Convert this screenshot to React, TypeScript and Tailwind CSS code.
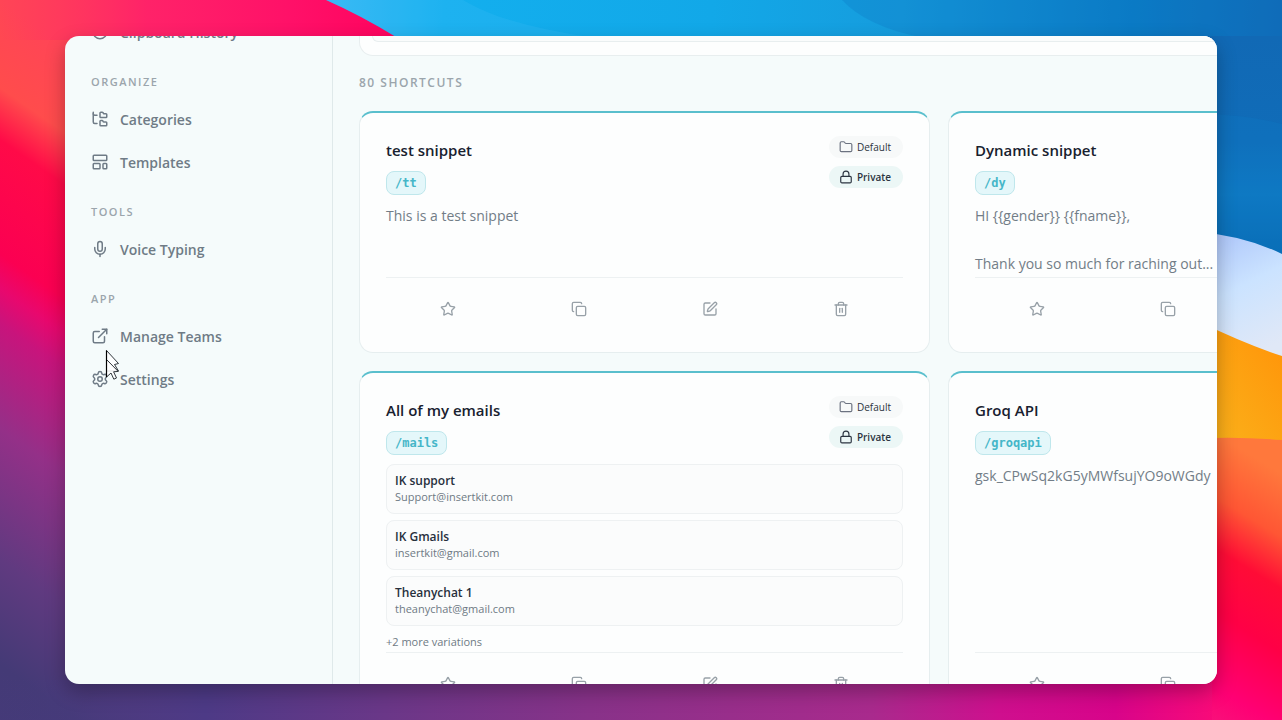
import type { ReactNode } from "react";
import {
  Copy,
  ExternalLink,
  Folder,
  FolderTree,
  History,
  LayoutTemplate,
  Lock,
  Mic,
  Settings,
  SquarePen,
  Star,
  Trash2,
} from "lucide-react";

type Variation = { name: string; value: string };
type Snippet = { title: string; shortcut: string; body?: string; variations?: Variation[]; more?: string };

const snippets: Snippet[] = [
  { title: "test snippet", shortcut: "/tt", body: "This is a test snippet" },
  { title: "Dynamic snippet", shortcut: "/dy", body: "HI {{gender}} {{fname}},\n\nThank you so much for raching out..." },
  {
    title: "All of my emails",
    shortcut: "/mails",
    variations: [
      { name: "IK support", value: "Support@insertkit.com" },
      { name: "IK Gmails", value: "insertkit@gmail.com" },
      { name: "Theanychat 1", value: "theanychat@gmail.com" },
    ],
    more: "+2 more variations",
  },
  { title: "Groq API", shortcut: "/groqapi", body: "gsk_CPwSq2kG5yMWfsujYO9oWGdy" },
];

function Wallpaper() {
  return (
    <svg
      className="absolute inset-0 size-full"
      viewBox="0 0 1282 720"
      preserveAspectRatio="none"
      aria-hidden="true"
    >
      <defs>
        <linearGradient id="dusk" gradientUnits="userSpaceOnUse" x1="0" y1="0" x2="-410" y2="590">
          <stop offset="0" stopColor="#ff4556" />
          <stop offset="0.1" stopColor="#ff4c4c" />
          <stop offset="0.16" stopColor="#ff0a48" />
          <stop offset="0.29" stopColor="#fb0052" />
          <stop offset="0.33" stopColor="#e8086e" />
          <stop offset="0.37" stopColor="#c8147c" />
          <stop offset="0.49" stopColor="#943088" />
          <stop offset="0.64" stopColor="#603a80" />
          <stop offset="0.76" stopColor="#443a76" />
          <stop offset="1" stopColor="#473b80" />
        </linearGradient>
        <linearGradient id="pink" x1="0" x2="1" y1="0" y2="0">
          <stop offset="0" stopColor="#ff2a66" stopOpacity="0" />
          <stop offset="0.35" stopColor="#ff1c6c" stopOpacity="0.85" />
          <stop offset="0.7" stopColor="#ff1068" />
          <stop offset="1" stopColor="#ff005c" />
        </linearGradient>
        <linearGradient id="sky" gradientUnits="userSpaceOnUse" x1="330" y1="0" x2="1282" y2="60">
          <stop offset="0" stopColor="#35b8f4" />
          <stop offset="0.12" stopColor="#13afee" />
          <stop offset="0.4" stopColor="#12a8e8" />
          <stop offset="0.6" stopColor="#169cdd" />
          <stop offset="0.84" stopColor="#0a7cc6" />
          <stop offset="1" stopColor="#1167b4" />
        </linearGradient>
        <linearGradient id="sea" x1="0" x2="0" y1="0" y2="1">
          <stop offset="0" stopColor="#1169b5" />
          <stop offset="0.45" stopColor="#106cb8" />
          <stop offset="0.7" stopColor="#0f78c2" />
          <stop offset="1" stopColor="#0868b0" />
        </linearGradient>
        <linearGradient id="cloud" x1="0" x2="0.3" y1="0" y2="1">
          <stop offset="0" stopColor="#a9c2fa" />
          <stop offset="0.5" stopColor="#cbe3ff" />
          <stop offset="1" stopColor="#e0e8f7" />
        </linearGradient>
        <linearGradient id="amber" x1="1" x2="0.3" y1="0.2" y2="1">
          <stop offset="0" stopColor="#ff960a" />
          <stop offset="1" stopColor="#fbb01a" />
        </linearGradient>
        <linearGradient id="ember" x1="0.15" x2="0" y1="0" y2="1">
          <stop offset="0" stopColor="#ff783c" />
          <stop offset="0.22" stopColor="#ff5634" />
          <stop offset="0.4" stopColor="#ff0c36" />
          <stop offset="0.62" stopColor="#ff0046" />
          <stop offset="0.88" stopColor="#ff0074" />
          <stop offset="1" stopColor="#f8107a" />
        </linearGradient>
        <linearGradient id="plum" x1="0" x2="1" y1="0" y2="0">
          <stop offset="0" stopColor="#473b80" stopOpacity="0" />
          <stop offset="0.16" stopColor="#4d3a86" />
          <stop offset="0.3" stopColor="#6a3788" />
          <stop offset="0.46" stopColor="#883289" />
          <stop offset="0.68" stopColor="#a92a8d" />
          <stop offset="0.78" stopColor="#cf0f8e" />
          <stop offset="0.87" stopColor="#d8048a" />
          <stop offset="0.95" stopColor="#fa0a78" />
          <stop offset="1" stopColor="#fa0a78" />
        </linearGradient>
      </defs>
      <rect width="1282" height="720" fill="url(#dusk)" />
      <rect width="420" height="40" fill="url(#pink)" />
      <path d="M326 0 Q362 16 396 37 L1282 80 V0Z" fill="url(#sky)" />
      <path d="M463 0 Q480 10 500 17 Q540 30 590 37 H396 Q362 16 326 0Z" fill="#4cc4f8" opacity="0.18" />
      <path d="M842 0 Q866 26 920 37 H1282 V0Z" fill="#0e78c2" opacity="0.3" />
      <rect y="680" width="1282" height="40" fill="url(#plum)" />
      <path d="M1200 36 H1282 V262 H1200Z" fill="url(#sea)" />
      <path d="M1200 114 Q1245 114 1282 124 V262 H1200Z" fill="#0a7cc8" opacity="0.25" />
      <path d="M1200 232 Q1245 236 1282 254 V370 H1200Z" fill="url(#cloud)" />
      <path d="M1200 322 Q1245 344 1282 356 V450 H1200Z" fill="url(#amber)" />
      <path d="M1212 438 Q1245 437 1282 440 V720 H1212Z" fill="url(#ember)" />
    </svg>
  );
}

function NavGroup({ title, children }: { title: string; children: ReactNode }) {
  return (
    <section className="flex flex-col gap-[9px]">
      <h2 className="text-[11px] leading-4 font-semibold tracking-[1.5px] text-[#9ba5ac]">{title}</h2>
      <div className="flex flex-col gap-[3px]">{children}</div>
    </section>
  );
}

function NavItem({ icon, label }: { icon: ReactNode; label: string }) {
  return (
    <a href="#" className="flex h-10 items-center gap-[11px] text-[14px] font-semibold text-[#6f7b86]">
      {icon}
      {label}
    </a>
  );
}

const action = "flex justify-center";

function SnippetCard({ snippet, tall }: { snippet: Snippet; tall: boolean }) {
  return (
    <article className="rounded-[14px] border border-t-2 border-[#e6eeef] border-t-[#5abfcd] bg-[#fdfefe] px-[26px] pt-[23px] pb-[13px]">
      <div className="flex h-[59px] items-start justify-between">
        <div className="flex flex-col items-start gap-[7px]">
          <h3 className="text-[15px] leading-7 font-semibold text-[#18212f]">{snippet.title}</h3>
          <code className="flex h-6 items-center rounded-lg border border-[#bfe7ec] bg-[#e4f7fa] px-2 font-['DejaVu_Sans_Mono',monospace] text-[12px] font-bold text-[#45b6c8]">
            {snippet.shortcut}
          </code>
        </div>
        <div className="flex flex-col items-end gap-2 text-[10px] font-medium text-[#2b3440]">
          <span className="flex h-[22px] items-center gap-1 rounded-full bg-[#f7f9f9] pr-3 pl-[10px]">
            <Folder className="size-[14px] text-[#6b7280]" />
            Default
          </span>
          <span className="flex h-[22px] items-center gap-1 rounded-full bg-[#ecf7f6] pr-3 pl-[10px] font-semibold">
            <Lock className="size-[14px]" />
            Private
          </span>
        </div>
      </div>
      <div className={tall ? "h-[197px] pt-[9px]" : "h-[82px] pt-[9px]"}>
        {snippet.body && <p className="text-[14px] leading-6 whitespace-pre text-[#727d87]">{snippet.body}</p>}
        {snippet.variations && (
          <ul className="flex flex-col gap-1.5">
            {snippet.variations.map((v) => (
              <li key={v.name} className="h-[50px] rounded-lg border border-[#eef1f2] bg-[#fbfcfc] px-2 pt-2">
                <p className="text-[12px] leading-4 font-semibold text-[#27303c]">{v.name}</p>
                <p className="text-[11px] leading-4 text-[#6e7a84]">{v.value}</p>
              </li>
            ))}
          </ul>
        )}
        {snippet.more && <p className="mt-2 text-[11px] leading-4 text-[#6e7a84]">{snippet.more}</p>}
      </div>
      <div className="grid h-[62px] grid-cols-4 items-center gap-2 border-t border-[#edf1f2] text-[#98a1a8]">
        <button aria-label="Favorite" className={action}>
          <Star className="size-4" />
        </button>
        <button aria-label="Copy" className={action}>
          <Copy className="size-4" />
        </button>
        <button aria-label="Edit" className={action}>
          <SquarePen className="size-4" />
        </button>
        <button aria-label="Delete" className={action}>
          <Trash2 className="size-4" />
        </button>
      </div>
    </article>
  );
}

function Cursor() {
  return (
    <svg className="absolute top-[349px] left-[105px]" width="16" height="32" viewBox="0 0 16 32" aria-hidden="true">
      <g fill="#fff" fillOpacity="0.85" stroke="#30363c" strokeWidth="1" strokeLinejoin="round">
        <path d="M1.5 1.5 L13.5 14.5 L9.5 15.5 L13.5 22 L1.5 22Z" />
        <path d="M1.5 10.5 L13.2 22.4 L8.6 22.8 L11.5 29 L8.8 30.2 L6 24 L1.5 28Z" />
      </g>
      <path d="M1.5 1.5 V28" stroke="#000" strokeWidth="1.2" />
    </svg>
  );
}

export default function App() {
  return (
    <div className="relative h-screen overflow-hidden px-[65px] py-9 font-['Open_Sans','Noto_Sans',sans-serif]">
      <Wallpaper />
      <div className="relative flex h-full overflow-hidden rounded-[14px] bg-[#f5fbfb] shadow-[0_8px_20px_rgba(0,0,0,0.28)]">
        <aside className="-mt-6 flex w-[268px] shrink-0 flex-col border-r border-[#dfe9ea] px-[26px]">
          <NavItem icon={<History className="size-[18px]" />} label="Clipboard History" />
          <nav className="mt-[22px] flex flex-col gap-[22px]">
            <NavGroup title="ORGANIZE">
              <NavItem icon={<FolderTree className="size-[18px]" />} label="Categories" />
              <NavItem icon={<LayoutTemplate className="size-[18px]" />} label="Templates" />
            </NavGroup>
            <NavGroup title="TOOLS">
              <NavItem icon={<Mic className="size-[18px]" />} label="Voice Typing" />
            </NavGroup>
            <NavGroup title="APP">
              <NavItem icon={<ExternalLink className="size-[18px]" />} label="Manage Teams" />
              <NavItem icon={<Settings className="size-[18px]" />} label="Settings" />
            </NavGroup>
          </nav>
        </aside>
        <main className="min-w-0 flex-1 overflow-hidden pl-[26px]">
          <div className="w-[calc(100%+302px)]">
            <div className="h-5 rounded-b-[14px] border border-t-0 border-[#e8eeef] bg-[#fdfefe] px-3">
              <div className="h-1.5 rounded-b-lg border border-t-0 border-[#e8eeef] bg-[#fafcfc]" />
            </div>
            <h2 className="mt-[19px] mb-5 text-[12px] leading-4 font-semibold tracking-[1.5px] text-[#9ba5ac]">
              80 SHORTCUTS
            </h2>
            <div className="grid grid-cols-2 gap-[18px]">
              {snippets.map((s, i) => (
                <SnippetCard key={s.title} snippet={s} tall={i > 1} />
              ))}
            </div>
          </div>
        </main>
      </div>
      <Cursor />
    </div>
  );
}
